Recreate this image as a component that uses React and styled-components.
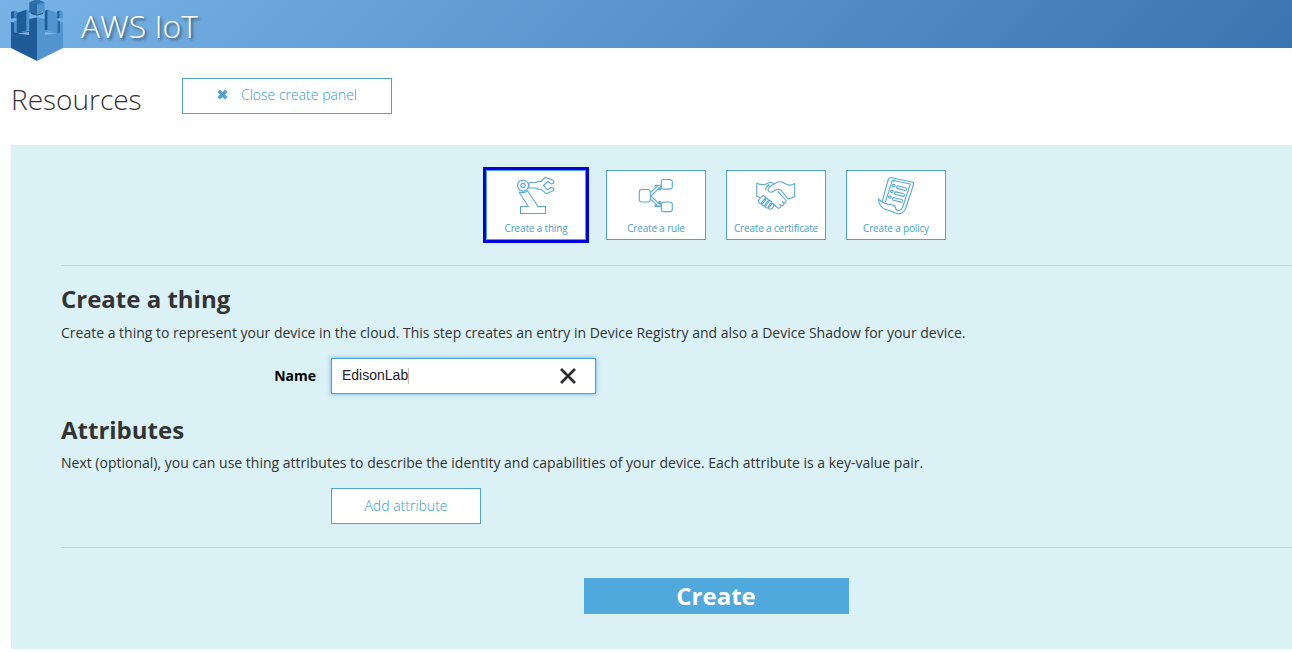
import React from 'react';
import styled, { createGlobalStyle } from 'styled-components';

const GlobalStyle = createGlobalStyle`
  *, *::before, *::after { box-sizing: border-box; }
  body {
    margin: 0;
    background: #fff;
    color: #333;
    font-family: "Open Sans", "Noto Sans", sans-serif;
    font-size: 14px;
    overflow: hidden;
  }
  button, input { font: inherit; margin: 0; }
`;

const Page = styled.div`
  height: 652px;
  overflow: hidden;
`;

const Header = styled.header`
  display: flex;
  height: 48px;
  padding-left: 11px;
  background: linear-gradient(135deg, #77b3e6 0%, #3a75b1 100%);
`;

const Logo = styled.svg`
  flex: none;
  width: 52px;
  height: 62px;
`;

const Brand = styled.div`
  margin-left: 18px;
  color: #fff;
  font-size: 32px;
  font-weight: 300;
  line-height: 51px;
  white-space: nowrap;
  text-shadow: 2px 2px 3px rgba(0, 0, 0, 0.5);
`;

const TitleBar = styled.div`
  display: flex;
  align-items: flex-start;
  height: 97px;
  padding: 30px 0 0 11px;
`;

const PageTitle = styled.h1`
  width: 171px;
  margin: 0;
  font-size: 28px;
  font-weight: 300;
  line-height: 43px;
`;

const OutlineButton = styled.button`
  display: flex;
  align-items: center;
  justify-content: center;
  gap: 13px;
  width: ${({ $width }) => $width}px;
  height: 36px;
  padding: 0 0 ${({ $lift = 2 }) => $lift}px;
  border: 1px solid #4fa3d1;
  background: #fff;
  color: #3a9ace;
  font-size: 14px;
  font-weight: 300;
  white-space: nowrap;
`;

const Panel = styled.main`
  height: 504px;
  margin-left: 11px;
  padding: 25px 0 0 50px;
  background: #daf1f5;
  overflow: hidden;
`;

const Content = styled.div`
  width: 1310px;
`;

const Tiles = styled.div`
  display: flex;
  justify-content: center;
  gap: 20px;
  padding-bottom: 25px;
  border-bottom: 1px solid #a9daec;
`;

const Tile = styled.button`
  display: flex;
  flex-direction: column;
  align-items: center;
  width: 100px;
  height: 70px;
  padding: 4px 0 0;
  border: 1px solid #4fa3d1;
  outline: ${({ $selected }) => ($selected ? '3px solid #0000e0' : 'none')};
  background: #fff;
  color: #4ba0d0;
  font-size: 10px;
  letter-spacing: -0.17px;
  line-height: 14px;
  white-space: nowrap;

  svg {
    flex: none;
    width: 42px;
    height: 42px;
    margin-bottom: 4px;
    fill: none;
    stroke: #58a9d8;
    stroke-width: 1.1;
    stroke-linejoin: round;
    stroke-linecap: round;
  }
`;

const SectionTitle = styled.h2`
  margin: ${({ $top }) => $top}px 0 0;
  font-size: 24px;
  font-weight: 700;
  line-height: 32px;
`;

const Description = styled.p`
  margin: 0;
  padding-top: ${({ $top }) => $top}px;
  line-height: 20px;
  white-space: nowrap;
`;

const FieldRow = styled.div`
  display: flex;
  align-items: center;
  margin-top: 15px;
`;

const Label = styled.label`
  width: 270px;
  padding: 0 15px 2px 0;
  color: #000;
  font-weight: 700;
  text-align: right;
`;

const InputBox = styled.div`
  display: flex;
  align-items: center;
  width: 265px;
  height: 36px;
  padding: 0 19px 0 10px;
  border: 1px solid #4fa3d1;
  background: #fff;
  box-shadow: 0 0 4px rgba(75, 166, 224, 0.85);
`;

const Value = styled.span`
  color: #222;
  font-family: "Liberation Sans", Arial, sans-serif;
  font-size: 14px;
  line-height: 16px;
  padding-bottom: 2px;
`;

const Caret = styled.span`
  width: 1px;
  height: 16px;
  background: #bbb;
`;

const ClearIcon = styled.svg`
  width: 16px;
  height: 16px;
  margin-left: auto;
  stroke: #2c2c2c;
  stroke-width: 2.7;
`;

const AttributeRow = styled.div`
  padding: 15px 0 23px 270px;
  border-bottom: 1px solid #a9daec;
`;

const Actions = styled.div`
  display: flex;
  justify-content: center;
  padding-top: 30px;
`;

const CreateButton = styled.button`
  width: 265px;
  height: 36px;
  padding: 0;
  border: 0;
  background: #4fa9dc;
  color: #fff;
  font-size: 24px;
  font-weight: 700;
  line-height: 36px;
`;

const AwsLogo = () => (
  <Logo viewBox="0 0 52 62">
    <path d="M0 22 5 23V32.5L18 31V19L26 17.5V61L0 48Z" fill="#205b99" />
    <path d="M52 22 47 23V32.5L34 31V19L26 17.5V61L52 48Z" fill="#5294cf" />
    <path d="M6 33.5 18 32V35ZM46 33.5 34 32V35Z" fill="#84b4df" />
    <path d="M3 21.5 5.7 20V33L3 32.3Z" fill="#4e90cb" />
    <path d="M49 21.5 46.3 20V33L49 32.3Z" fill="#2a69a8" />
    <path d="M0 12 3.5 10.5V18L0 18.8Z" fill="#205b99" />
    <path d="M3.5 10.5 6 11.5V18.7L3.5 18Z" fill="#4486c4" />
    <path d="M5.7 13 15.7 9.5V30.5L5.7 33Z" fill="#205b99" />
    <path d="M15.7 9.5 18.3 11V30L15.7 30.5Z" fill="#5294cf" />
    <path d="M52 12 48.5 10.5V18L52 18.8Z" fill="#5294cf" />
    <path d="M48.5 10.5 46 11.5V18.7L48.5 18Z" fill="#205b99" />
    <path d="M46.3 13 36.5 9.5V30.5L46.3 33Z" fill="#5294cf" />
    <path d="M36.5 9.5 33.7 11V30L36.5 30.5Z" fill="#205b99" />
    <path d="M20 12.5 26 11 32 12.5V14L26 15.5 20 14Z" fill="#1a476f" />
    <path d="M18.3 2.5 26 0V14.7L18.3 12.5Z" fill="#2a68a8" />
    <path d="M33.7 2.5 26 0V14.7L33.7 12.5Z" fill="#5294cf" />
    <path d="M18.3 2.5 26-1 33.7 2.5 26 4.3Z" fill="#2f71ae" />
  </Logo>
);

const CloseGlyph = () => (
  <svg width="11" height="11" viewBox="0 0 11 11">
    <path d="M1.7 1.7 9.3 9.3M9.3 1.7 1.7 9.3" stroke="#4ba6d6" strokeWidth="3.4" />
  </svg>
);

const RobotArmIcon = () => (
  <svg viewBox="0 0 42 42">
    <circle cx="8" cy="10.6" r="5.5" />
    <circle cx="8" cy="10.6" r="2.2" />
    <path d="M14 7.5H21L23 6.5H26L30.5 2.2 38.3 5.5 39 8 36.5 9 32.5 6.5 28.5 10.5 32.5 14.8 36.5 12.3 39 13.5 38.3 15.8 31 18.7 26 14.2H23L21 13H14Z" />
    <path d="M4 17 13.3 31.5H5.5V38.5H30.5V31.5H23L12.7 16C10 17.7 7 18 4 17Z" />
  </svg>
);

const RuleIcon = () => (
  <svg viewBox="0 0 42 42">
    <rect x="4.3" y="14.5" width="11" height="12.5" rx="2.4" />
    <rect x="26.3" y="4.5" width="11" height="9.6" rx="2.4" />
    <rect x="26.3" y="27" width="11" height="9.6" rx="2.4" />
    <path d="M15.5 17.5 22 11.3H20V10.2H25.3V15H24.2V12.8L16 20.8 24.2 28.8V26.2H25.3V31.4H20V30.2H22L15.5 23.8" />
  </svg>
);

const HandshakeIcon = () => (
  <svg viewBox="0 0 42 42">
    <path d="M1.8 8C5 10 8 10 11 9L15 7.3 19.5 8.5M1.8 8V21.3L5 22.5" />
    <path d="M39.7 8.5C36 11 33 10.5 30 8.5L26 6.7C22 6.5 18 9 14 12.5 11 16 15.5 18.8 19 16L22 14.3 26 15 33 24 39.7 21.7V8.5" />
    <path d="M23 16.3 31 25.5C32 28 29.5 29.3 27.5 26.8M28.7 28C29.5 30.8 26.5 31.8 24.5 29.3M26 31C26 33.5 22.5 34 21 31.5L18.8 29.5" />
    <path d="M14 9.5C12 11.5 11 12.5 10.5 14.5" />
    <rect x="4.5" y="20.6" width="5.2" height="8.4" rx="2.6" transform="rotate(40 7 25)" />
    <rect x="7.7" y="23" width="5.2" height="8.4" rx="2.6" transform="rotate(40 10.2 27)" />
    <rect x="11.1" y="25.4" width="5" height="8" rx="2.5" transform="rotate(40 13.7 29)" />
    <rect x="14.3" y="28" width="4.2" height="6.4" rx="2.1" transform="rotate(40 16.3 30.8)" />
  </svg>
);

const ScrollIcon = () => (
  <svg viewBox="0 0 42 42">
    <path d="M15.5 2.5 37 7Q39 7.8 38.5 9.5L30.5 34Q27.5 39.5 22.5 38.8L9.5 34Q3.5 30.5 3.5 24 8 28.5 15 29.5L18.5 30Q20.5 31.5 21 34.5 24.5 37.5 27.5 32.5L35.3 9 17.5 5.2 10.5 26.5" />
    <path d="M15.5 2.5Q13.7 3.3 13 5.5L7.5 25.5" />
    <rect x="22" y="10.7" width="10" height="2.7" rx="1.2" transform="rotate(14 22 10.7)" />
    <rect x="20" y="16.6" width="10" height="2.7" rx="1.2" transform="rotate(14 20 16.6)" />
    <rect x="18" y="22.4" width="10" height="2.7" rx="1.2" transform="rotate(14 18 22.4)" />
    <rect x="17.5" y="9.6" width="2.5" height="2" rx=".8" />
    <rect x="15.6" y="15.4" width="2.5" height="2" rx=".8" />
    <rect x="13.6" y="21.1" width="2.5" height="2" rx=".8" />
  </svg>
);

const tiles = [
  { label: 'Create a thing', Icon: RobotArmIcon, selected: true },
  { label: 'Create a rule', Icon: RuleIcon },
  { label: 'Create a certificate', Icon: HandshakeIcon },
  { label: 'Create a policy', Icon: ScrollIcon },
];

export default function App() {
  return (
    <Page>
      <GlobalStyle />
      <Header>
        <AwsLogo />
        <Brand>AWS IoT</Brand>
      </Header>
      <TitleBar>
        <PageTitle>Resources</PageTitle>
        <OutlineButton $width={210} $lift={3}>
          <CloseGlyph />
          Close create panel
        </OutlineButton>
      </TitleBar>
      <Panel>
        <Content>
          <Tiles>
            {tiles.map(({ label, Icon, selected }) => (
              <Tile key={label} $selected={selected}>
                <Icon />
                {label}
              </Tile>
            ))}
          </Tiles>
          <SectionTitle $top={17}>Create a thing</SectionTitle>
          <Description $top={8}>
            Create a thing to represent your device in the cloud. This step creates an entry in
            Device Registry and also a Device Shadow for your device.
          </Description>
          <FieldRow>
            <Label>Name</Label>
            <InputBox>
              <Value>EdisonLab</Value>
              <Caret />
              <ClearIcon viewBox="0 0 16 16">
                <path d="M1 1 15 15M15 1 1 15" />
              </ClearIcon>
            </InputBox>
          </FieldRow>
          <SectionTitle $top={20}>Attributes</SectionTitle>
          <Description $top={7}>
            Next (optional), you can use thing attributes to describe the identity and
            capabilities of your device. Each attribute is a key-value pair.
          </Description>
          <AttributeRow>
            <OutlineButton $width={150}>Add attribute</OutlineButton>
          </AttributeRow>
          <Actions>
            <CreateButton>Create</CreateButton>
          </Actions>
        </Content>
      </Panel>
    </Page>
  );
}
